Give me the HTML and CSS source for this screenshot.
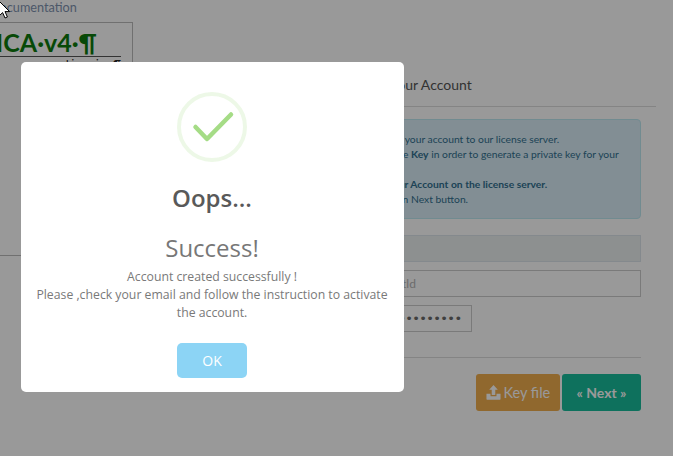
FILE: index.html
```html
<!DOCTYPE html>
<html lang="en">
<head>
    <meta charset="UTF-8">
    <meta name="viewport" content="width=device-width, initial-scale=1.0">
    <title>Documentation - Your Account</title>
    <link rel="stylesheet" href="styles.css">
</head>
<body>

    <div class="page">
        <!-- Left column: document preview -->
        <div class="doc-column">
            <a class="doc-link">Documentation</a>
            <div class="doc-box">
                <div class="doc-title">TICA·v4·¶</div>
                <div class="doc-sub">Licensing·¶</div>
            </div>
        </div>

        <!-- Right column: account form -->
        <div class="account-column">
            <h4 class="account-heading">Your Account</h4>
            <div class="info-box">
                <p>First we can connect your account to our license server.</p>
                <p>Use the option Create <b>Key</b> in order to generate a private key for your</p>
                <p>account.</p>
                <p><b>Then we register your Account on the license server.</b></p>
                <p>Finally, please click on Next button.</p>
            </div>
            <input class="field field-disabled" type="text" disabled>
            <input class="field" type="text" placeholder="https://mydomain.tld">
            <input class="field field-short" type="password" value="password1234password12">
            <div class="form-actions">
                <button class="btn btn-key" type="button">
                    <svg class="upload-icon" viewBox="0 0 16 16"><path d="M8 0 L12.6 5 H9.9 V10.6 H6.1 V5 H3.4 Z M0.5 9.2 H4.8 V11.4 Q4.8 12 5.4 12 H10.6 Q11.2 12 11.2 11.4 V9.2 H15.5 V15 Q15.5 15.6 14.9 15.6 H1.1 Q0.5 15.6 0.5 15 Z"/></svg>
                    Key file
                </button>
                <button class="btn btn-next" type="button">« Next »</button>
            </div>
        </div>
    </div>

    <!-- Success dialog -->
    <div class="overlay">
        <div class="modal">
            <svg class="check-icon" viewBox="0 0 70 70">
                <circle cx="35" cy="35" r="33" fill="none" stroke="#a5dc86" stroke-opacity="0.2" stroke-width="4"/>
                <path d="M18.5 35 L30 47 L54 22.5" fill="none" stroke="#a5dc86" stroke-width="4.5" stroke-linecap="round" stroke-linejoin="round"/>
            </svg>
            <h2 class="modal-title">Oops...</h2>
            <div class="modal-subtitle">Success!</div>
            <p class="modal-text">Account created successfully !<br>Please ,check your email and follow the instruction to activate the account.</p>
            <button class="modal-ok" type="button">OK</button>
        </div>
    </div>

    <svg class="cursor" viewBox="0 0 12 20"><path d="M1 1 V16 L4.6 12.6 L7 18 L9.4 17 L7 11.6 H11.6 Z" fill="#fff" stroke="#000" stroke-width="1"/></svg>

</body>
</html>
```

FILE: styles.css
```css
/* General Reset */
* {
    margin: 0;
    padding: 0;
    box-sizing: border-box;
}

html, body {
    height: 100%;
    overflow: hidden;
}

body {
    background: #fff;
    color: #2c3e50;
    font-family: "Lato", sans-serif;
    font-size: 14px;
}

.page {
    display: flex;
    height: 456px;
}

/* Document column */
.doc-column {
    flex: 0 0 133px;
    overflow: hidden;
}

.doc-link {
    display: block;
    margin-left: -10px;
    height: 22px;
    line-height: 15px;
    font-size: 12.7px;
    color: #7f93b0;
}

.doc-box {
    height: 234px;
    margin-left: -40px;
    border: 1px solid #bbb;
    padding-top: 4px;
}

.doc-title {
    width: 160px;
    height: 30px;
    padding-right: 24px;
    border-bottom: 1px solid #555;
    line-height: 30px;
    font-size: 25px;
    font-weight: 700;
    color: #0c7a0c;
    text-align: right;
    white-space: nowrap;
}

.doc-sub {
    width: 160px;
    font-size: 11px;
    color: #222;
    text-align: right;
}

/* Account column */
.account-column {
    flex: 1;
    min-width: 0;
    padding: 76px 17px 0 167px;
}

.account-heading {
    height: 31px;
    padding-left: 90px;
    border-bottom: 1px solid #ddd;
    font-size: 14px;
    font-weight: 400;
    line-height: 17px;
    color: #555;
    white-space: nowrap;
}

.info-box {
    height: 100px;
    margin: 12px 15px 16px 0;
    padding: 12px 8px 0;
    background: #d9edf7;
    border: 1px solid #bce8f1;
    border-radius: 4px;
    color: #31708f;
    font-size: 10.3px;
    line-height: 15px;
    white-space: nowrap;
}

.field {
    display: block;
    width: 341px;
    height: 27px;
    margin-bottom: 8px;
    padding: 0 6px;
    border: 1px solid #ccc;
    background: #fff;
    color: #6a6a6a;
    font-family: "Lato", sans-serif;
    font-size: 12px;
}

.field::placeholder {
    color: #b4b4b4;
}

.field-disabled {
    background: #ecf0f1;
    border-color: #dce4ec;
}

.field-short {
    width: 172px;
    margin-bottom: 25px;
    font-family: "DejaVu Sans", sans-serif;
    font-size: 13px;
    letter-spacing: -0.65px;
}

.form-actions {
    display: flex;
    justify-content: flex-end;
    gap: 2px;
    width: 341px;
    padding-top: 16px;
    border-top: 1px solid #ddd;
}

/* Buttons */
.btn {
    height: 37px;
    border: none;
    border-radius: 3px;
    color: #fff;
    font-family: "Lato", sans-serif;
    font-size: 14px;
}

.btn-key {
    width: 84px;
    background: #f0ad4e;
    font-size: 14.5px;
}

.upload-icon {
    width: 15px;
    height: 15px;
    margin-right: -1px;
    fill: #fff;
    vertical-align: -2px;
}

.btn-next {
    width: 79px;
    background: #18bc9c;
    font-weight: 700;
}

/* Dialog */
.overlay {
    position: fixed;
    top: 0;
    left: 0;
    right: 0;
    bottom: 0;
    padding: 62px 0 0 21px;
    background: rgba(0, 0, 0, 0.4);
}

.modal {
    display: flex;
    flex-direction: column;
    align-items: center;
    width: 383px;
    height: 330px;
    padding: 30px 13px 0 12px;
    background: #fff;
    border-radius: 5px;
    font-family: "Open Sans", sans-serif;
    text-align: center;
}

.check-icon {
    flex: none;
    width: 70px;
    height: 70px;
}

.modal-title {
    margin-top: 18px;
    font-size: 24px;
    font-weight: 600;
    line-height: 36px;
    color: #595959;
}

.modal-subtitle {
    margin-top: 16px;
    font-size: 24px;
    line-height: 32px;
    color: #777;
}

.modal-text {
    margin-top: 4px;
    font-size: 12.25px;
    line-height: 18px;
    color: #797979;
}

.modal-ok {
    margin-top: 21px;
    width: 70px;
    height: 35px;
    border: none;
    border-radius: 5px;
    background: #8cd4f5;
    color: #fff;
    font-family: "Open Sans", sans-serif;
    font-size: 14px;
}

/* Mouse pointer */
.cursor {
    position: fixed;
    top: 0;
    left: -2px;
    width: 12px;
    height: 20px;
}
```
